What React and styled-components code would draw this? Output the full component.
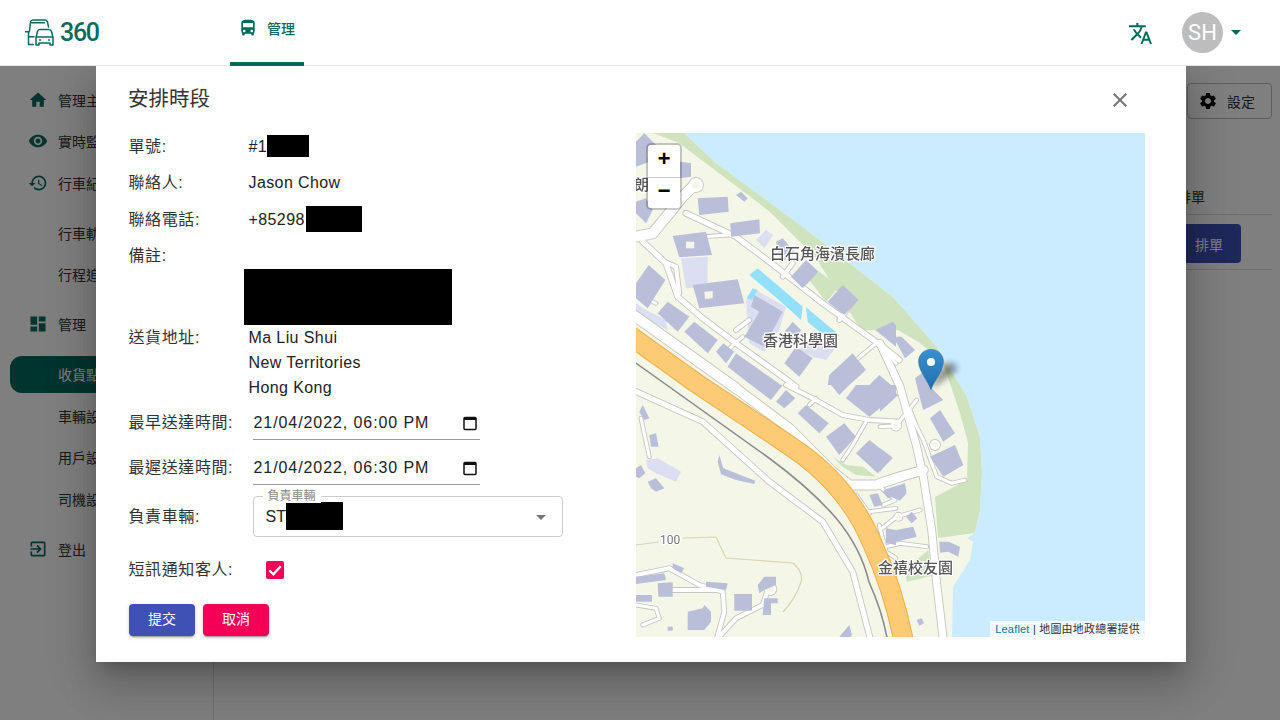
import React from 'react';
import styled, { createGlobalStyle } from 'styled-components';
import {
  MdHome, MdVisibility, MdHistory, MdDashboard, MdExitToApp, MdDirectionsBus,
  MdTranslate, MdSettings, MdClose, MdArrowDropDown,
} from 'react-icons/md';

const FONT = `"Liberation Sans", "Noto Sans CJK TC", sans-serif`;
const UI = `Roboto, "Noto Sans CJK TC", sans-serif`;

const Global = createGlobalStyle`
  html, body { margin: 0; height: 100%; overflow: hidden; background: #fff; }
  * { box-sizing: border-box; }
`;

const Page = styled.div`
  position: relative; width: 1280px; height: 720px; overflow: hidden;
  display: flex; flex-direction: column; font-family: ${UI}; color: #333;
`;
const Header = styled.header`
  position: relative; z-index: 3; height: 66px; flex: none; background: #fff;
  border-bottom: 1px solid #e6e6e6; display: flex; align-items: stretch; color: #00695c;
`;
const Brand = styled.div`
  width: 230px; flex: none; padding-left: 25px; display: flex; align-items: center; gap: 5px;
`;
const BrandText = styled.span`
  font: 500 25px/1 ${UI}; letter-spacing: -1.3px; color: #0b6a5c;
`;
const Tab = styled.div`
  width: 74px; height: 66px; border-bottom: 4px solid #00695c; display: flex; align-items: center;
  justify-content: center; gap: 9px; font-size: 14px; font-weight: 500; padding: 0 1px 6px 0;
`;
const HeaderRight = styled.div`
  margin-left: auto; display: flex; align-items: center; padding-right: 39px;
`;
const TranslateBtn = styled.div`
  display: flex; margin-right: 29px; position: relative; top: 1px;
`;
const Avatar = styled.div`
  width: 41px; height: 41px; border-radius: 50%; background: #bdbdbd; color: #fff;
  display: flex; align-items: center; justify-content: center; font: 400 22px/1 ${UI};
`;
const Caret = styled.div`
  width: 0; height: 0; margin-left: 8px; border-left: 5px solid transparent;
  border-right: 5px solid transparent; border-top: 5px solid #00695c;
`;

const Body = styled.div`
  flex: 1; display: flex; min-height: 0;
`;
const Sidebar = styled.nav`
  width: 214px; flex: none; border-right: 1px solid #ddd; padding-top: 13px; overflow: hidden;
`;
const Group = styled.div`
  display: flex; flex-direction: column; margin-bottom: 8.5px;
`;
const Item = styled.div`
  height: 37px; flex: none; margin: 2.25px 0 2.25px 10px; padding-left: ${p => (p.$sub ? 48 : 18)}px;
  display: flex; align-items: center; gap: 10px; font-size: 14px; white-space: nowrap;
  color: ${p => (p.$active ? '#fff' : '#333')};
  background: ${p => (p.$active ? '#00695c' : 'transparent')};
  border-radius: ${p => (p.$active ? '12px 0 0 12px' : '0')};
  svg { color: #00695c; flex: none; }
`;
const Main = styled.main`
  flex: 1; padding: 17px 8px 0 0; display: flex; flex-direction: column; align-items: flex-end;
`;
const SettingsBtn = styled.div`
  width: 85px; height: 36px; border: 1px solid #bbb; border-radius: 4px; font-size: 14px;
  display: flex; align-items: center; justify-content: center; gap: 9px; padding: 0 6px 1px 0;
  svg { color: #000; }
`;
const TableHead = styled.div`
  width: 100%; height: 34px; margin-top: 62px; padding-right: 67px; border-bottom: 1px solid #ddd;
  display: flex; justify-content: flex-end; align-items: center; font-size: 14px; padding-bottom: 4px;
`;
const TableRow = styled.div`
  width: 100%; height: 55px; border-bottom: 1px solid #ddd; display: flex; justify-content: flex-end;
  padding: 9px 31px 0 0;
`;
const PrimarySmall = styled.div`
  width: 64px; height: 39px; border-radius: 4px; background: #3f51b5; color: #fff; font-size: 14px;
  display: flex; align-items: center; justify-content: center;
`;

const Overlay = styled.div`
  position: absolute; inset: 66px 0 0 0; z-index: 2; background: rgba(0, 0, 0, .5);
`;
const Modal = styled.section`
  position: absolute; left: 96px; top: 0; width: 1090px; height: 596px; background: #fff;
  padding: 0 41px 0 33px;
  box-shadow: 0 11px 15px -7px rgba(0,0,0,.2), 0 24px 38px 3px rgba(0,0,0,.14), 0 9px 46px 8px rgba(0,0,0,.12);
`;
const ModalHead = styled.div`
  height: 62px; padding: 19px 13px 0 0; display: flex; justify-content: space-between; align-items: flex-start;
`;
const Title = styled.h2`
  margin: 0; font: 400 20.5px/28px ${FONT}; color: #333; position: relative; left: -1px;
`;
const CloseBtn = styled.div`
  display: flex; color: #757575; margin-top: 3px;
`;
const ModalBody = styled.div`
  display: flex; align-items: flex-start;
`;
const Form = styled.div`
  width: 507px; flex: none; font: 400 16px/25px ${FONT}; color: #333;
`;
const Row = styled.div`
  display: flex; align-items: center; height: ${p => p.$h}px;
`;
const Label = styled.div`
  width: 120px; flex: none; white-space: nowrap; padding-top: ${p => p.$pt || 0}px; letter-spacing: .6px; margin-left: -.5px;
`;
const Value = styled.div`
  display: flex; align-items: center; color: #222; letter-spacing: .4px;
`;
const Redact = styled.span`
  display: block; flex: none; background: #000; width: ${p => p.$w}px; height: ${p => p.$h}px;
  margin-left: ${p => p.$ml || 0}px;
`;
const AddressRow = styled.div`
  display: flex; align-items: flex-start; height: 131px;
`;
const AddressValue = styled.div`
  color: #222; letter-spacing: .4px;
`;
const AddressBlock = styled(Redact)`
  margin-left: -5px;
`;
const DateField = styled.div`
  margin-left: 4px; width: 227px; height: 35px; border-bottom: 1px solid #999; display: flex;
  align-items: center; justify-content: space-between; padding: 0 1px 0 1px; color: #222;
  letter-spacing: .92px; white-space: nowrap;
  svg { position: relative; top: 1px; }
`;
const SelectBox = styled.div`
  position: relative; margin: 1px 0 0 4px; width: 310px; height: 41px; border: 1px solid #ccc; border-radius: 4px;
  display: flex; align-items: center; padding: 0 0 1px 12px; color: #222;
  svg { position: absolute; right: 9px; top: 8px; color: #757575; }
`;
const SelectLegend = styled.span`
  position: absolute; left: 9px; top: -8px; padding: 0 5px; background: #fff; font-size: 12px; line-height: 14px; color: #888;
`;
const Check = styled.div`
  margin-left: 17px; width: 18px; height: 18px; border-radius: 2px; background: #f50057;
  display: flex; align-items: center; justify-content: center;
`;
const Actions = styled.div`
  display: flex; gap: 8px; margin-top: 7px;
`;
const Btn = styled.div`
  width: 66px; height: 31.5px; border-radius: 4px; color: #fff; font-size: 14px;
  background: ${p => p.$bg}; display: flex; align-items: center; justify-content: center;
  box-shadow: 0 3px 1px -2px rgba(0,0,0,.2), 0 2px 2px 0 rgba(0,0,0,.14), 0 1px 5px 0 rgba(0,0,0,.12);
`;

const MapBox = styled.div`
  position: relative; width: 509px; height: 504px; margin-top: 5px; overflow: hidden; flex: none;
  background: #f4f6e8;
`;
const MapSvg = styled.svg`
  display: block; width: 509px; height: 504px; filter: blur(.45px);
`;
const MapLabel = styled.text`
  font: 500 15px "Noto Sans CJK TC", sans-serif; fill: #555; stroke: #fff; stroke-width: 2.5px;
  paint-order: stroke; stroke-linejoin: round;
`;
const Contour = styled.text`
  font: 400 12px Roboto, sans-serif; fill: #777; stroke: #fff; stroke-width: 2.5px; paint-order: stroke;
`;
const Zoom = styled.div`
  position: absolute; left: 10px; top: 10px; width: 36px; border: 2px solid rgba(0,0,0,.2); border-radius: 5px;
  background-clip: padding-box; overflow: hidden;
`;
const ZoomBtn = styled.div`
  height: 31.5px; background: #fff; display: flex; align-items: center; justify-content: center; color: #000;
  font: 700 22px/1 "Liberation Mono", monospace; & + & { border-top: 1px solid #ccc; }
`;
const Marker = styled.svg`
  position: absolute; left: 282px; top: 216px; overflow: visible;
`;
const Attribution = styled.div`
  position: absolute; right: 0; bottom: 0; height: 16px; padding: 0 5px; background: rgba(255,255,255,.7);
  font: 400 11px/16px ${FONT}; color: #333; white-space: nowrap; letter-spacing: .2px;
`;
const AttrLink = styled.span`
  color: #0078a8;
`;

const conv = {
  z3: ([x, y]) => [x / 3, y / 3 - 3],
  z4: ([x, y]) => [x / 3, 252 + y / 3],
  z5: ([x, y]) => [244 + x / 3, 197 + y / 3],
};
const pts = (zone, list) => list.map(p => conv[zone](p).map(n => n.toFixed(1)).join(',')).join(' ');

const COAST = [[48,0],[80,30],[167,94],[257,164],[301,214],[331,264],[344,304],[346,340],[344,377],[339,400],[331,405],[337,409],[334,427],[317,454],[316,504]];
const GREEN = [[17,0],[48,0],[80,30],[167,94],[257,164],[301,214],[331,264],[344,304],[346,340],[344,377],[339,400],[302,405],[299,364],[331,347],[332,310],[324,280],[307,230],[284,210],[262,197],[225,197],[180,125],[133,78],[43,10]];

const BUILDINGS = [
  ['z3',[[185,205],[275,200],[278,245],[190,255]]],
  ['z3',[[283,280],[370,268],[372,310],[285,320]]],
  ['z3',[[110,318],[210,305],[228,375],[130,382]]],
  ['z3',[[170,465],[305,448],[325,520],[190,535]]],
  ['z3',[[0,460],[38,405],[88,450],[35,535],[0,505]]],
  ['z3',[[65,550],[95,515],[160,560],[125,605]]],
  ['z3',[[145,605],[175,575],[245,630],[215,670]]],
  ['z3',[[240,665],[262,640],[295,665],[270,700]]],
  ['z3',[[275,710],[300,670],[435,765],[345,765]]],
  ['z3',[[355,495],[440,545],[385,650],[325,620],[370,545],[345,530]]],
  ['z3',[[420,335],[440,325],[475,365],[435,400]]],
  ['z3',[[465,440],[510,390],[548,425],[500,475]]],
  ['z3',[[575,515],[620,465],[668,510],[625,555]]],
  ['z3',[[718,600],[770,575],[780,585],[780,650]]],
  ['z3',[[445,700],[480,650],[530,685],[490,740]]],
  ['z3',[[575,765],[580,735],[650,670],[690,720],[640,765]]],
  ['z3',[[700,765],[730,735],[765,765]]],
  ['z3',[[442,610],[470,575],[495,600],[480,640],[450,640]]],
  ['z3',[[100,90],[165,100],[165,140],[130,145]]],
  ['z3',[[0,35],[25,10],[60,45],[35,60],[35,85],[40,95],[0,110]]],
  ['z3',[[0,215],[30,205],[50,240],[30,280],[0,250]]],
  ['z3',[[300,195],[315,185],[335,205],[325,215]]],
  ['z5',[[105,145],[125,130],[160,180],[190,210],[130,240],[120,205]]],
  ['z5',[[150,265],[180,240],[225,310],[190,335]]],
  ['z5',[[150,380],[225,345],[250,405],[190,440]]],
  ['z5',[[0,150],[55,195],[0,245]]],
  ['z5',[[0,355],[35,380],[0,425]]],
  ['z5',[[10,480],[75,460],[80,490],[60,512],[25,495]]],
  ['z5',[[20,605],[100,590],[110,620],[30,640]]],
  ['z5',[[78,560],[95,545],[112,565],[95,580]]],
  ['z5',[[178,635],[205,635],[240,650],[235,680],[205,665],[180,668]]],
  ['z5',[[110,870],[125,865],[132,880],[118,887]]],
  ['z5',[[40,20],[65,20],[105,60],[75,85]]],
  ['z4',[[345,0],[440,0],[405,45]]],
  ['z4',[[420,50],[450,15],[478,40],[445,70]]],
  ['z4',[[485,85],[510,60],[578,115],[550,145]]],
  ['z4',[[570,155],[625,115],[660,155],[610,210]]],
  ['z4',[[660,205],[700,165],[770,220],[725,265]]],
  ['z4',[[630,40],[660,0],[780,0],[780,30],[700,95]]],
  ['z4',[[585,0],[640,0],[610,30]]],
  ['z4',[[700,330],[725,325],[740,360],[715,365]]],
  ['z4',[[740,320],[780,305],[780,335],[755,340]]],
  ['z4',[[65,595],[110,592],[110,635],[67,635]]],
  ['z4',[[295,627],[348,627],[348,677],[295,677]]],
  ['z4',[[155,680],[200,670],[205,660],[225,680],[225,710],[205,735],[155,735]]],
  ['z4',[[0,575],[85,565],[90,585],[0,597]]],
  ['z4',[[210,590],[275,595],[270,615],[210,605]]],
  ['z4',[[110,535],[145,550],[135,565],[110,550]]],
  ['z4',[[365,600],[385,575],[420,575],[420,600],[385,615],[370,625]]],
  ['z4',[[380,690],[385,640],[425,640],[425,655],[405,655],[405,690]]],
  ['z4',[[0,630],[48,630],[48,650],[0,650]]],
  ['z4',[[95,725],[110,725],[110,737],[95,737]]],
  ['z4',[[610,755],[640,720],[648,750],[640,760]]],
  ['z4',[[10,80],[20,60],[40,100],[25,105]]],
  ['z4',[[40,150],[60,145],[68,185],[45,185]]],
  ['z4',[[0,250],[15,240],[28,265],[10,280],[0,275]]],
  ['z4',[[35,290],[60,280],[85,310],[60,320],[45,310]]],
  ['z4',[[250,210],[262,250],[300,265],[358,287],[355,297],[300,285],[255,268],[245,230]]],
  ['z4',[[750,430],[780,435],[780,480],[750,475]]],
];
const LIGHT = [
  ['z3',[[135,385],[215,380],[215,470],[150,475]]],
  ['z3',[[360,330],[390,300],[412,315],[385,355]]],
  ['z3',[[330,510],[360,480],[450,530],[430,600],[385,665],[340,640]]],
  ['z3',[[0,520],[30,540],[90,570],[95,600],[0,550]]],
  ['z3',[[490,660],[530,620],[610,640],[570,690],[530,680]]],
  ['z4',[[30,225],[65,220],[135,260],[120,290],[60,265],[35,250]]],
];
const HOLES = [
  ['z3',[[150,335],[175,335],[175,355],[150,355]]],
  ['z3',[[205,485],[230,483],[230,505],[207,507]]],
];
const WATER = [
  ['z3',[[340,435],[365,415],[500,530],[495,570],[440,520]]],
  ['z3',[[510,532],[610,615],[590,640],[515,575]]],
  ['z3',[[332,505],[350,475],[365,480],[347,510]]],
];
const LAWN = [
  ['z5',[[75,720],[145,660],[150,700],[210,725],[80,755]]],
  ['z4',[[590,215],[630,240],[680,245],[720,275],[660,270],[620,245]]],
  ['z3',[[520,450],[550,425],[610,470],[570,515]]],
];
const ROADS = [
  ['z3',[[-15,550],[300,775]],10],
  ['z4',[[300,10],[460,130],[590,260],[640,300],[720,300],[795,275]],9],
  ['z5',[[0,460],[60,440],[130,420]],9],
  ['z5',[[0,40],[60,170],[110,350],[130,440],[155,600],[170,760],[190,930]],7],
  ['z3',[[150,250],[300,320],[420,410],[560,520],[740,650],[790,690]],5],
  ['z3',[[0,320],[50,310],[140,200],[170,170]],10],
  ['z3',[[20,335],[90,400],[125,500],[200,565],[300,640],[440,740],[480,770]],5],
  ['z3',[[200,320],[280,315]],3],
  ['z3',[[95,400],[120,410],[130,490]],4],
  ['z3',[[440,440],[470,400]],4],
  ['z3',[[610,570],[640,530]],4],
  ['z3',[[300,600],[340,570]],4],
  ['z3',[[270,665],[320,620]],3],
  ['z3',[[60,520],[20,500]],3],
  ['z3',[[660,690],[720,640],[745,660],[780,700]],3],
  ['z4',[[450,0],[530,40],[620,90],[700,105],[790,110]],4],
  ['z4',[[540,40],[520,60]],3],
  ['z4',[[690,110],[650,180],[620,225]],3],
  ['z5',[[90,240],[110,290],[130,330],[170,440],[215,460],[255,450]],3],
  ['z5',[[0,290],[48,287],[110,210]],3],
  ['z5',[[0,600],[50,560],[120,540]],3],
  ['z5',[[0,655],[60,640],[140,650]],3],
  ['z5',[[10,525],[45,510],[0,470]],3],
  ['z4',[[-10,15],[200,110],[400,290],[560,410],[650,560],[705,770]],5],
  ['z4',[[0,570],[100,550],[190,600],[260,620],[265,680],[240,770]],4],
  ['z4',[[0,660],[60,670],[70,700],[20,720]],3],
  ['z4',[[255,750],[300,700],[380,660],[392,625]],4],
  ['z4',[[110,615],[250,615]],4],
  ['z4',[[15,100],[40,215]],3],
  ['z4',[[650,395],[700,380],[780,370]],3],
  ['z4',[[660,330],[700,385]],3],
  ['z4',[[730,420],[750,500],[780,520]],3],
];
const CIRCLES = [
  ['z3',180,165,7],['z5',48,287,5],['z5',165,345,5],['z4',403,612,6],['z5',55,560,4],
];
const HIGHWAY = 'M-14,197 L63,252 Q125,293 167,322 Q215,358 237,412 Q258,458 268,510';

function Poly({ list, fill }) {
  return list.map(([z, p], i) => <polygon key={i} points={pts(z, p)} fill={fill} />);
}

function MapDrawing() {
  return (
    <MapSvg viewBox="0 0 509 504">
      <rect width="509" height="504" fill="#f4f6e8" />
      <polygon points={GREEN.map(p => p.join(',')).join(' ')} fill="#cfe3bf" />
      <polygon points={[...COAST, [509, 504], [509, 0]].map(p => p.join(',')).join(' ')} fill="#cbebff" />
      <Poly list={LAWN} fill="#cfe3bf" />
      <Poly list={LIGHT} fill="#dcdff2" />
      {ROADS.map(([z, p, w], i) => (
        <polyline key={i} points={pts(z, p)} fill="none" stroke="#c6c6c0" strokeWidth={w + 1.8} strokeLinejoin="round" strokeLinecap="round" />
      ))}
      {CIRCLES.map(([z, x, y, r], i) => {
        const [cx, cy] = conv[z]([x, y]);
        return <circle key={i} cx={cx} cy={cy} r={r + .9} fill="#c6c6c0" />;
      })}
      {ROADS.map(([z, p, w], i) => (
        <polyline key={i} points={pts(z, p)} fill="none" stroke="#fff" strokeWidth={w} strokeLinejoin="round" strokeLinecap="round" />
      ))}
      {CIRCLES.map(([z, x, y, r], i) => {
        const [cx, cy] = conv[z]([x, y]);
        return <g key={i}><circle cx={cx} cy={cy} r={r} fill="#fff" /><circle cx={cx} cy={cy} r={r * .55} fill="#f4f6e8" /></g>;
      })}
      <path d="M-10,223 L133,325 Q175,356 200,385 Q225,415 233,449 Q247,480 252,510" fill="none" stroke="#8b8b8b" strokeWidth="1.6" />
      <path d={HIGHWAY} fill="none" stroke="#f8ae48" strokeWidth="20.5" />
      <path d={HIGHWAY} fill="none" stroke="#fdca75" strokeWidth="18.5" />
      <path d="M0,412 L23,409 M47,405 L80,404 L90,425 L157,430 Q168,440 165,449 Q160,465 147,479" fill="none" stroke="#d9d4b0" strokeWidth="1.2" />
      <Poly list={BUILDINGS} fill="#b9bfd9" />
      <Poly list={HOLES} fill="#f4f6e8" />
      <Poly list={WATER} fill="#92e0fb" />
      <Contour x="24" y="411">100</Contour>
      <MapLabel x="134" y="126">白石角海濱長廊</MapLabel>
      <MapLabel x="127" y="213">香港科學園</MapLabel>
      <MapLabel x="242" y="440">金禧校友園</MapLabel>
      <MapLabel x="-2" y="57">朗</MapLabel>
    </MapSvg>
  );
}

function LogoIcon() {
  return (
    <svg width="30" height="27" viewBox="0 0 30 27" fill="none" stroke="#0b6a5c" strokeWidth="1.5" strokeLinecap="round" strokeLinejoin="round">
      <path d="M4.5 12 L5.5 3 Q6 1 8 1 H20 Q22 1 22.5 3 L23.5 8" />
      <path d="M6.7 3.8 H19.5" />
      <path d="M0.5 12.8 H4.3" />
      <path d="M3.5 12.8 V25.5 H8.3" />
      <path d="M4 17.8 H9" />
      <path d="M11 18.5 L12.5 12.5 Q13 10.5 15 10.5 H24 Q26 10.5 26.5 12.5 L28 18.5 V26 H25 V24 H14 V26 H11 Z" />
      <path d="M11.5 18 H27.5" />
      <path d="M14.5 21 H15.5 M23.5 21 H24.5" />
    </svg>
  );
}

function CalendarIcon() {
  return (
    <svg width="18" height="18" viewBox="0 0 18 18" fill="none">
      <rect x="3" y="3.5" width="12" height="12" rx="1" stroke="#111" strokeWidth="1.5" />
      <rect x="3" y="3" width="12" height="3" fill="#111" />
    </svg>
  );
}

function CheckMark() {
  return (
    <svg width="16" height="16" viewBox="0 0 14 14" fill="none">
      <path d="M2 7.2 L5.6 10.8 L12 3.8" stroke="#fff" strokeWidth="2" />
    </svg>
  );
}

const NAV = [
  [
    { icon: MdHome, text: '管理主頁' },
    { icon: MdVisibility, text: '實時監察' },
    { icon: MdHistory, text: '行車紀錄' },
  ],
  [{ text: '行車軌跡' }, { text: '行程追蹤' }],
  [{ icon: MdDashboard, text: '管理' }],
  [
    { text: '收貨點設定', active: true },
    { text: '車輛設定' },
    { text: '用戶設定' },
    { text: '司機設定' },
  ],
  [{ icon: MdExitToApp, text: '登出' }],
];

export default function App() {
  return (
    <Page>
      <Global />
      <Header>
        <Brand><LogoIcon /><BrandText>360</BrandText></Brand>
        <Tab><MdDirectionsBus size={20} />管理</Tab>
        <HeaderRight>
          <TranslateBtn><MdTranslate size={25} /></TranslateBtn>
          <Avatar>SH</Avatar>
          <Caret />
        </HeaderRight>
      </Header>
      <Body>
        <Sidebar>
          {NAV.map((group, g) => (
            <Group key={g}>
              {group.map(({ icon: Icon, text, active }) => (
                <Item key={text} $sub={!Icon} $active={active}>
                  {Icon && <Icon size={20} />}
                  {text}
                </Item>
              ))}
            </Group>
          ))}
        </Sidebar>
        <Main>
          <SettingsBtn><MdSettings size={20} />設定</SettingsBtn>
          <TableHead>排單</TableHead>
          <TableRow><PrimarySmall>排單</PrimarySmall></TableRow>
        </Main>
      </Body>
      <Overlay>
        <Modal>
          <ModalHead>
            <Title>安排時段</Title>
            <CloseBtn><MdClose size={24} /></CloseBtn>
          </ModalHead>
          <ModalBody>
            <Form>
              <Row $h={36.5}><Label>單號:</Label><Value>#1<Redact $w={42} $h={22} /></Value></Row>
              <Row $h={36.5}><Label>聯絡人:</Label><Value>Jason Chow</Value></Row>
              <Row $h={36.5}><Label>聯絡電話:</Label><Value>+85298<Redact $w={56} $h={26} $ml={1} /></Value></Row>
              <Row $h={31.5}><Label $pt={5}>備註:</Label></Row>
              <AddressRow>
                <Label $pt={56}>送貨地址:</Label>
                <AddressValue>
                  <AddressBlock $w={208} $h={56} />
                  <div>Ma Liu Shui</div>
                  <div>New Territories</div>
                  <div>Hong Kong</div>
                </AddressValue>
              </AddressRow>
              <Row $h={45}><Label>最早送達時間:</Label><DateField><span>21/04/2022, 06:00 PM</span><CalendarIcon /></DateField></Row>
              <Row $h={45}><Label>最遲送達時間:</Label><DateField><span>21/04/2022, 06:30 PM</span><CalendarIcon /></DateField></Row>
              <Row $h={52}>
                <Label>負責車輛:</Label>
                <SelectBox>
                  <SelectLegend>負責車輛</SelectLegend>
                  ST<Redact $w={57} $h={28} />
                  <MdArrowDropDown size={24} />
                </SelectBox>
              </Row>
              <Row $h={55}><Label>短訊通知客人:</Label><Check><CheckMark /></Check></Row>
              <Actions>
                <Btn $bg="#3f51b5">提交</Btn>
                <Btn $bg="#f50057">取消</Btn>
              </Actions>
            </Form>
            <MapBox>
              <MapDrawing />
              <Zoom>
                <ZoomBtn>+</ZoomBtn>
                <ZoomBtn>−</ZoomBtn>
              </Zoom>
              <Marker width="26" height="41" viewBox="0 0 26 41">
                <defs>
                  <linearGradient id="pin" x1="0" y1="0" x2="0" y2="1">
                    <stop offset="0" stopColor="#3a8fd0" />
                    <stop offset="1" stopColor="#1f6fae" />
                  </linearGradient>
                  <filter id="blur" x="-50%" y="-50%" width="200%" height="200%"><feGaussianBlur stdDeviation="3" /></filter>
                </defs>
                <path d="M13 40 L38 22 Q41 14 31 14 Q22 16 13 40 Z" fill="#000" opacity=".42" filter="url(#blur)" />
                <path d="M13 40.5 C10 32 .6 22 .6 12.6 C.6 5.6 6 .4 13 .4 C20 .4 25.4 5.6 25.4 12.6 C25.4 22 16 32 13 40.5 Z" fill="url(#pin)" stroke="#2a6ea3" strokeWidth=".6" />
                <circle cx="13" cy="13" r="4" fill="#fff" />
              </Marker>
              <Attribution><AttrLink>Leaflet</AttrLink> | 地圖由地政總署提供</Attribution>
            </MapBox>
          </ModalBody>
        </Modal>
      </Overlay>
    </Page>
  );
}
